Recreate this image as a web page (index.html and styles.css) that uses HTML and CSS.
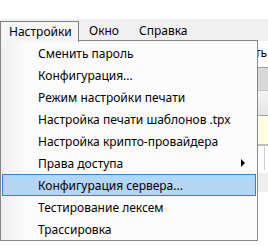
FILE: index.html
```html
<!doctype html>
<html>
<head>
  <meta charset="utf-8" />
  <title>Настройки</title>
  <link rel="stylesheet" href="styles.css">
</head>
<body>
  <div class="window">
    <div class="titlegap"></div>
    <div class="menubar">
      <div class="menubar-item active">Настройки</div>
      <div class="menubar-item">Окно</div>
      <div class="menubar-item">Справка</div>
    </div>

    <div class="content">
      <div class="toolbar"><span class="tool-btn">Применить</span></div>
      <div class="grid-head"></div>
      <div class="grid-row"></div>
      <div class="hint"></div>
      <div class="panel"><div class="panel-line"></div></div>
      <div class="strip"></div>
    </div>

    <div class="dropdown">
      <div class="menu-item">Сменить пароль</div>
      <div class="menu-item">Конфигурация...</div>
      <div class="menu-item">Режим настройки печати</div>
      <div class="menu-item">Настройка печати шаблонов .tpx</div>
      <div class="menu-item">Настройка крипто-провайдера</div>
      <div class="menu-item sub">Права доступа<span class="arrow"></span></div>
      <div class="menu-item hover">Конфигурация сервера...</div>
      <div class="menu-item">Тестирование лексем</div>
      <div class="menu-item">Трассировка</div>
    </div>
  </div>
</body>
</html>
```

FILE: styles.css
```css
body {
  margin: 0;
  background: #fff;
  font-family: 'Noto Sans', 'Open Sans', sans-serif;
  font-size: 12px;
  color: #000;
}
.window {
  position: relative;
  width: 268px;
  height: 246px;
  overflow: hidden;
}
.titlegap {
  height: 19px;
  background: #fff;
}
.menubar {
  display: flex;
  height: 22px;
  background: #f0f0f0;
}
.menubar-item {
  padding: 0 10px;
  line-height: 20px;
  margin-top: 2px;
}
.menubar-item.active {
  position: relative;
  z-index: 3;
  border: 1px solid #808080;
  border-bottom: none;
  background: #f5f5f5;
  padding: 0 9px 1px 8px;
  margin-bottom: -1px;
  width: 60px;
  line-height: 19px;
}

/* window content behind the menu */
.content {
  display: flex;
  flex-direction: column;
}
.toolbar {
  height: 26px;
  display: flex;
  justify-content: flex-end;
  align-items: center;
  padding-right: 1px;
  border-bottom: 1px solid #a0a0a0;
}
.tool-btn {
  white-space: nowrap;
  margin-top: -3px;
}
.grid-head {
  height: 22px;
  background: #d9d9d9;
  border-bottom: 1px solid #c8c8c8;
}
.grid-row {
  height: 24px;
  background: linear-gradient(#f2f2f2, #e6e6e6);
  border-bottom: 1px solid #a0a0a0;
}
.hint {
  height: 28px;
  background: #ffffe1;
  border-bottom: 2px solid #c0c0c0;
}
.panel {
  height: 27px;
  background: #fff;
  position: relative;
}
.panel-line {
  margin-left: 264px;
  width: 1px;
  height: 24px;
  background: #d0d0d0;
}
.strip {
  height: 19px;
  background: #efefef;
}

/* dropdown menu */
.dropdown {
  position: absolute;
  left: 0;
  top: 40px;
  width: 256px;
  padding: 1px 0 0;
  border: 1px solid #888;
  background: linear-gradient(to right, #f0f0f0 0, #fafafa 24px, #fcfcfc 25px, #fcfcfc 100%);
  z-index: 2;
}
.menu-item {
  position: relative;
  height: 22px;
  line-height: 21px;
  padding-left: 35px;
  margin: 0 1px;
  border: 1px solid transparent;
  box-sizing: border-box;
  white-space: nowrap;
}
.menu-item.hover {
  background: #b5d6f3;
  border-color: #2f83d4;
}
.arrow {
  position: absolute;
  right: 10px;
  top: 6px;
  border-left: 4px solid #000;
  border-top: 4px solid transparent;
  border-bottom: 4px solid transparent;
}
```
